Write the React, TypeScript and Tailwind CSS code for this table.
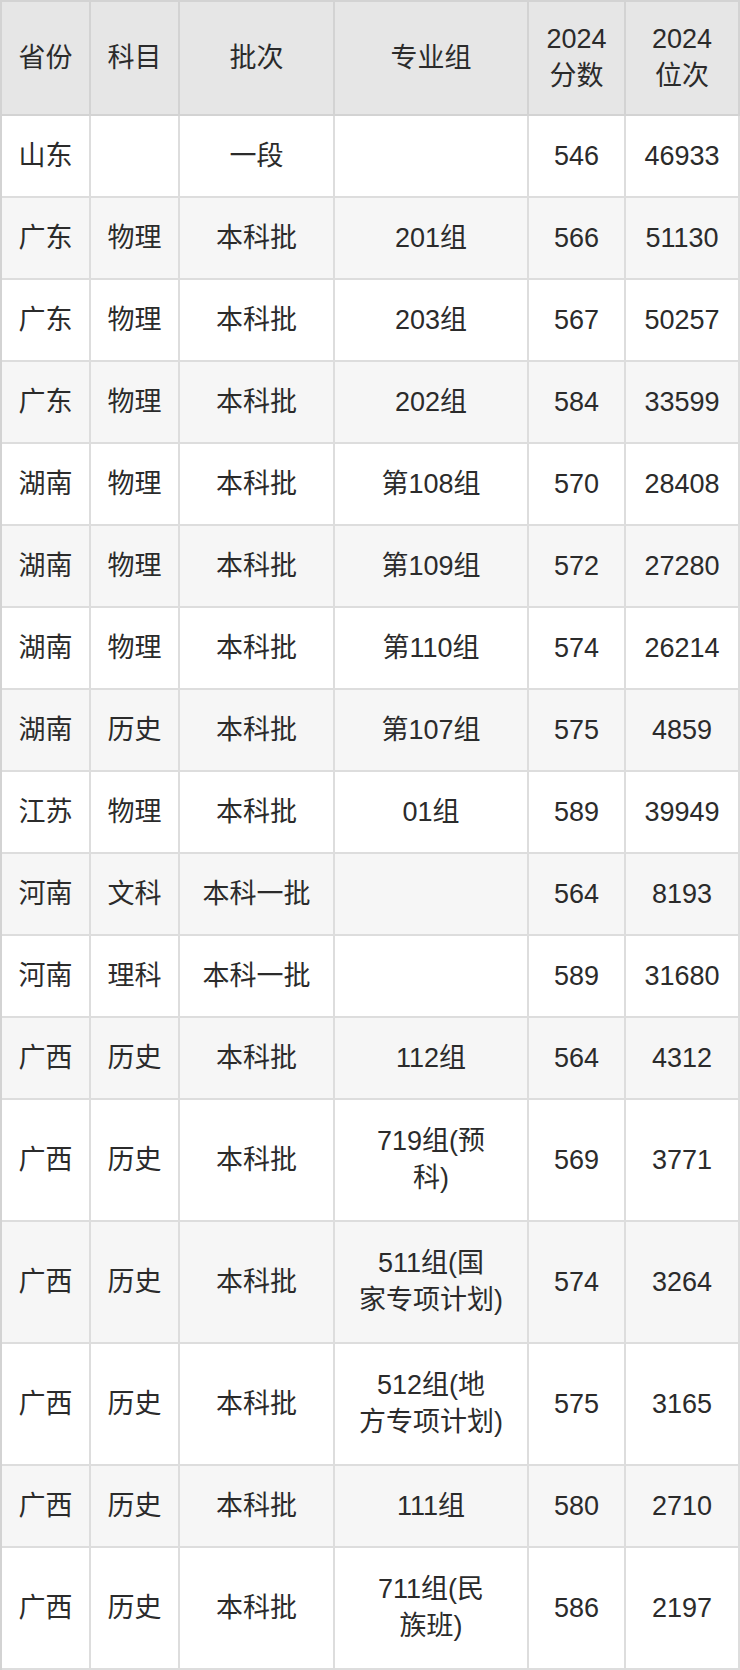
import React from 'react';

type Row = [string, string, string, string[], string, string];

const rows: Row[] = [
  ['山东', '', '一段', [], '546', '46933'],
  ['广东', '物理', '本科批', ['201组'], '566', '51130'],
  ['广东', '物理', '本科批', ['203组'], '567', '50257'],
  ['广东', '物理', '本科批', ['202组'], '584', '33599'],
  ['湖南', '物理', '本科批', ['第108组'], '570', '28408'],
  ['湖南', '物理', '本科批', ['第109组'], '572', '27280'],
  ['湖南', '物理', '本科批', ['第110组'], '574', '26214'],
  ['湖南', '历史', '本科批', ['第107组'], '575', '4859'],
  ['江苏', '物理', '本科批', ['01组'], '589', '39949'],
  ['河南', '文科', '本科一批', [], '564', '8193'],
  ['河南', '理科', '本科一批', [], '589', '31680'],
  ['广西', '历史', '本科批', ['112组'], '564', '4312'],
  ['广西', '历史', '本科批', ['719组(预', '科)'], '569', '3771'],
  ['广西', '历史', '本科批', ['511组(国', '家专项计划)'], '574', '3264'],
  ['广西', '历史', '本科批', ['512组(地', '方专项计划)'], '575', '3165'],
  ['广西', '历史', '本科批', ['111组'], '580', '2710'],
  ['广西', '历史', '本科批', ['711组(民', '族班)'], '586', '2197'],
];

const headers: string[][] = [['省份'], ['科目'], ['批次'], ['专业组'], ['2024', '分数'], ['2024', '位次']];

function Cell({ lines, className }: { lines: string[]; className: string }) {
  return (
    <div className={`flex flex-col items-center justify-center text-center border-r-2 border-b-2 leading-[37px] ${className}`}>
      {lines.map((l, i) => (
        <span key={i}>{l}</span>
      ))}
    </div>
  );
}

export default function App() {
  return (
    <div
      className="w-[740px] bg-white text-[27px] text-[#2b2b2b]"
      style={{ fontFamily: '"Liberation Sans", "Noto Sans CJK SC", sans-serif' }}
    >
      <div className="grid grid-cols-[89px_89px_155px_194px_97px_114px] border-l-2 border-t-2 border-[#d3d3d3]">
        {headers.map((h, i) => (
          <Cell key={i} lines={h} className="h-[114px] bg-[#e6e6e6] border-[#d3d3d3]" />
        ))}
        {rows.map((r, ri) => {
          const tall = r[3].length > 1;
          const rowCls = `${tall ? 'h-[122px]' : 'h-[82px]'} ${ri % 2 === 1 ? 'bg-[#f6f6f6]' : 'bg-white'} border-[#dddddd]`;
          return (
            <React.Fragment key={ri}>
              <Cell lines={[r[0]]} className={rowCls} />
              <Cell lines={[r[1]]} className={rowCls} />
              <Cell lines={[r[2]]} className={rowCls} />
              <Cell lines={r[3]} className={rowCls} />
              <Cell lines={[r[4]]} className={rowCls} />
              <Cell lines={[r[5]]} className={rowCls} />
            </React.Fragment>
          );
        })}
      </div>
    </div>
  );
}
